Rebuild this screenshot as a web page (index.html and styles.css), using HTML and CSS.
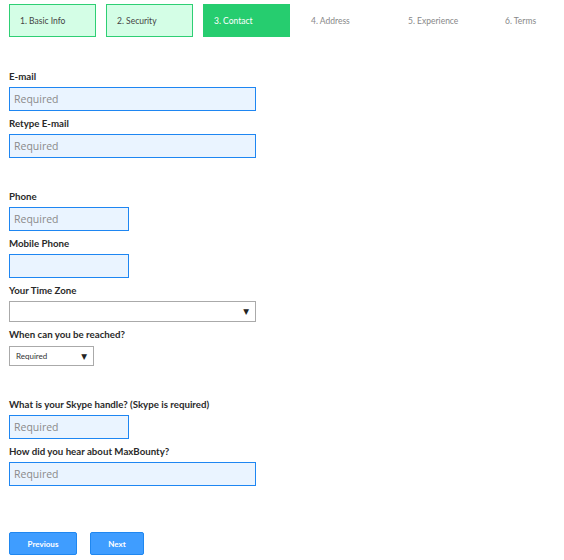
FILE: index.html
```html
<!DOCTYPE html>
<html>
<head>
<meta charset="utf-8">
<link rel="stylesheet" href="styles.css">
</head>
<body>
<div class="steps">
  <div class="step done">1. Basic Info</div>
  <div class="step done">2. Security</div>
  <div class="step active">3. Contact</div>
  <div class="step">4. Address</div>
  <div class="step">5. Experience</div>
  <div class="step">6. Terms</div>
</div>
<form class="form">
  <div class="field">
    <label class="label">E-mail</label>
    <input class="input wide" placeholder="Required">
  </div>
  <div class="field">
    <label class="label">Retype E-mail</label>
    <input class="input wide" placeholder="Required">
  </div>
  <div class="field group">
    <label class="label">Phone</label>
    <input class="input narrow" placeholder="Required">
  </div>
  <div class="field">
    <label class="label">Mobile Phone</label>
    <input class="input narrow">
  </div>
  <div class="field">
    <label class="label">Your Time Zone</label>
    <div class="select wide-select"><span></span><span class="arrow">▼</span></div>
  </div>
  <div class="field">
    <label class="label">When can you be reached?</label>
    <div class="select small-select"><span>Required</span><span class="arrow">▼</span></div>
  </div>
  <div class="field group">
    <label class="label">What is your Skype handle? (Skype is required)</label>
    <input class="input narrow" placeholder="Required">
  </div>
  <div class="field">
    <label class="label">How did you hear about MaxBounty?</label>
    <input class="input wide" placeholder="Required">
  </div>
  <div class="buttons">
    <button type="button" class="btn prev">Previous</button>
    <button type="button" class="btn next">Next</button>
  </div>
</form>
</body>
</html>
```
FILE: styles.css
```css
* { box-sizing: border-box; }
body {
  margin: 0;
  padding: 4px 9px 0;
  background: #fff;
  font-family: Lato, "Noto Sans", sans-serif;
  color: #333;
  overflow: hidden;
}
.steps {
  display: flex;
  gap: 10px;
}
.step {
  flex: none;
  width: 87px;
  height: 33px;
  display: flex;
  align-items: center;
  padding-left: 10px;
  font-size: 8.5px;
  color: #888;
  border: 1px solid transparent;
}
.step.done {
  background: #d4fee6;
  border-color: #2ecf74;
  color: #444;
}
.step.active {
  background: #26cd6f;
  border-color: #26cd6f;
  color: #fff;
}
.form {
  display: flex;
  flex-direction: column;
  margin-top: 33px;
}
.field {
  display: flex;
  flex-direction: column;
  margin-bottom: 6px;
}
.field.group { margin-top: 26px; }
.label {
  font-size: 9.7px;
  font-weight: 700;
  color: #2a2a2a;
  height: 12px;
  line-height: 12px;
  margin-bottom: 5px;
}
.input {
  height: 24px;
  border: 1px solid #1e86f2;
  background: #eaf4ff;
  padding: 0 4px;
  font-family: "Open Sans", sans-serif;
  font-size: 10.5px;
  color: #333;
  outline: none;
}
.input::placeholder { color: #8a8a8a; }
.wide { width: 247px; }
.narrow { width: 120px; }
.select {
  display: flex;
  justify-content: space-between;
  align-items: center;
  border: 1px solid #aaa;
  background: #fff;
  font-size: 8px;
  color: #333;
}
.wide-select { width: 247px; height: 21px; padding: 0 6px 0 8px; }
.small-select { width: 85px; height: 20px; padding: 0 6px 0 6px; margin-top: 1px; }
.arrow { font-size: 7.5px; color: #222; font-family: "DejaVu Sans", sans-serif; }
.buttons {
  display: flex;
  gap: 13px;
  margin-top: 40px;
}
.btn {
  height: 23px;
  border: 1px solid #1f87f0;
  background: #3f9dff;
  color: #fff;
  font-family: Lato, sans-serif;
  font-weight: 700;
  font-size: 8px;
  border-radius: 2px;
  padding: 0;
}
.prev { width: 68px; }
.next { width: 54px; }
```
